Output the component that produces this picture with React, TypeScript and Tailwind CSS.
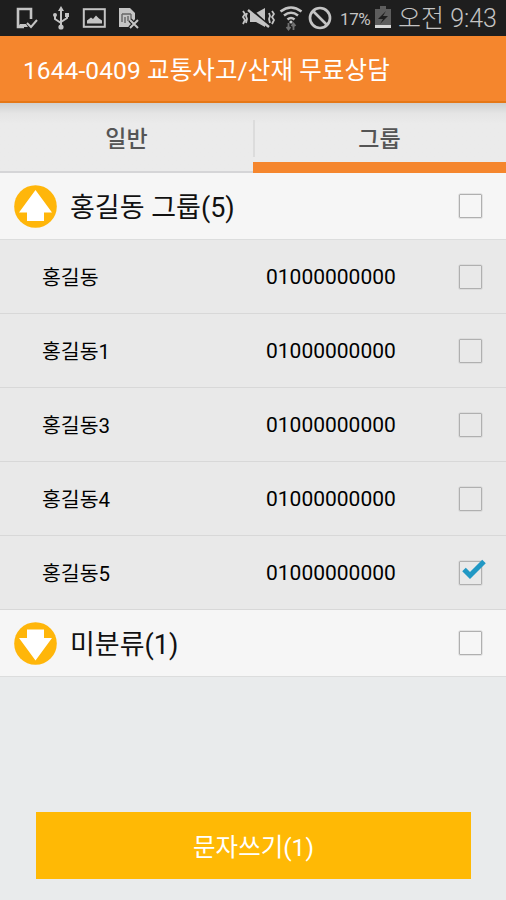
import React, { useState } from 'react';

interface Contact {
  name: string;
  phone: string;
}

const contacts: Contact[] = [
  { name: '홍길동', phone: '01000000000' },
  { name: '홍길동1', phone: '01000000000' },
  { name: '홍길동3', phone: '01000000000' },
  { name: '홍길동4', phone: '01000000000' },
  { name: '홍길동5', phone: '01000000000' },
];

const StatusBar: React.FC = () => (
  <div className="flex h-9 items-center justify-between bg-[#1e1e1e] pr-[9px] pl-4 text-[#c4c4c4]">
    <div className="flex items-center">
      {/* Device with check mark */}
      <svg className="h-6 w-[22px]" viewBox="0 0 22 24" fill="none" stroke="currentColor">
        <path d="M8 21H2V3h13v10" strokeWidth="2.6" />
        <path d="M4 18h6l2 3H2z" fill="currentColor" stroke="none" />
        <path d="M11 17l4 4 6-7" strokeWidth="2" />
      </svg>

      {/* USB */}
      <svg className="ml-[14px] h-6 w-[18px]" viewBox="0 0 18 24" fill="none" stroke="currentColor" strokeWidth="2">
        <path d="M9 4v17M3 10v3l6 4M15 9v3l-6 4" />
        <path d="M9 0l3 5H6z" fill="currentColor" stroke="none" />
        <circle cx="9" cy="21" r="2.6" fill="currentColor" stroke="none" />
        <circle cx="3" cy="9" r="2" fill="currentColor" stroke="none" />
        <path d="M13 7h4v4h-4z" fill="currentColor" stroke="none" />
      </svg>

      {/* Gallery */}
      <svg className="ml-3 h-6 w-6" viewBox="0 0 24 24" fill="none" stroke="currentColor">
        <rect x="1.8" y="3.2" width="21" height="17.6" strokeWidth="2" />
        <path d="M5 17.5v-3l4-3 2 1.5 3-3.5 3 3 3 2v3z" fill="currentColor" stroke="none" />
      </svg>

      {/* SIM card error */}
      <svg className="ml-[11px] h-6 w-[23px]" viewBox="0 0 23 24" fill="none" stroke="currentColor">
        <path d="M2 2h11l5 5v6l-5 8H2z" fill="currentColor" stroke="none" />
        <path d="M5 8h9M5 8v8M8 11v6M11 10v5M14 8v5" stroke="#666" strokeWidth="1.4" />
        <path d="M13 14l8 8M21 14l-8 8" stroke="#1e1e1e" strokeWidth="4.5" />
        <path d="M13 14l8 8M21 14l-8 8" strokeWidth="2" />
      </svg>
    </div>

    <div className="flex items-center">
      {/* Muted with vibration */}
      <svg className="h-6 w-[34px]" viewBox="0 0 34 24" fill="none" stroke="currentColor">
        <path d="M2 5l2 3-2 3 2 3-2 4M6 7l-1 3 1 3-1 4M31 5l2 3-2 3 2 3-2 4M28 7l1 3-1 3 1 4" strokeWidth="1.8" />
        <path d="M9 7h6l9-5v19l-9-5H9z" fill="currentColor" stroke="none" />
        <path d="M9 3l19 17" stroke="#1e1e1e" strokeWidth="3" />
        <path d="M7 4l21 17" strokeWidth="2.4" />
      </svg>

      {/* Wifi with traffic arrows */}
      <svg className="ml-[4px] h-[26px] w-6" viewBox="0 0 24 26" fill="none" stroke="currentColor" strokeWidth="2.6">
        <path d="M1.5 6.5q10.5-8 21 0M5 10.5q7-5.5 14 0M8.5 14.5q3.5-3 7 0" />
        <circle cx="12" cy="17" r="1.6" fill="currentColor" stroke="none" />
        <path d="M9.5 18v6M7.5 22l2 2.5 2-2.5M14.5 25v-6M12.5 21l2-2.5 2 2.5" stroke="#707070" strokeWidth="1.8" />
      </svg>

      {/* Blocked */}
      <svg className="ml-[5px] h-6 w-6" viewBox="0 0 24 24" fill="none" stroke="currentColor" strokeWidth="2.7">
        <circle cx="12" cy="12" r="10" />
        <path d="M5 5l14 14" />
      </svg>

      <span className="ml-[8px] w-[31px] pt-[2px] text-[17px] leading-none tracking-[-0.4px] whitespace-nowrap">17%</span>

      {/* Battery */}
      <svg className="ml-[3px] h-6 w-[18px]" viewBox="0 0 18 24">
        <path d="M6 0h6v3h5v19H1V3h5z" fill="#5d5d5d" />
        <path d="M1 19h16v3H1z" fill="#d8d8d8" />
        <path d="M12 5l-8 8h5l-3 5 8-8H9z" fill="#1e1e1e" />
      </svg>

      <span className="ml-[6px] text-[25px] leading-none font-light whitespace-nowrap">오전 9:43</span>
    </div>
  </div>
);

interface CheckboxProps {
  checked: boolean;
  onChange: () => void;
}

const Checkbox: React.FC<CheckboxProps> = ({ checked, onChange }) => (
  <button
    role="checkbox"
    aria-checked={checked}
    onClick={onChange}
    className="relative mr-6 h-[24px] w-[23px] shrink-0 rounded-[1px] border-[1.5px] border-[#b0b0b0] shadow-[0_0_0_0.5px_#cfcfcf]"
  >
    {checked && (
      <svg className="absolute -top-[4px] left-[1px] h-[24px] w-[26px]" viewBox="0 0 26 24" fill="none">
        <path d="M3 11.5l6 6L23 3.5" stroke="#2198c4" strokeWidth="5" />
      </svg>
    )}
  </button>
);

interface GroupHeaderProps {
  title: string;
  open: boolean;
  checked: boolean;
  onToggle: () => void;
  onCheck: () => void;
}

const GroupHeader: React.FC<GroupHeaderProps> = ({ title, open, checked, onToggle, onCheck }) => (
  <div className="flex h-[67px] items-center border-b border-[#dcdddd] bg-[#f6f6f6]">
    <button onClick={onToggle} className="flex flex-1 items-center gap-[13px] pl-[14px] text-left">
      <svg className="h-[43px] w-[43px]" viewBox="0 0 43 43">
        <circle cx="21.5" cy="21.5" r="21.3" fill="#ffb60a" />
        <path
          d={open ? 'M21.5 5L38 27.5h-8V36H13v-8.5H5z' : 'M13 7.5h17V16h8L21.5 38.5 5 16h8z'}
          fill="#fff"
        />
      </svg>
      <span className="pt-[5px] text-[27px] leading-none whitespace-nowrap text-[#111]">{title}</span>
    </button>
    <Checkbox checked={checked} onChange={onCheck} />
  </div>
);

const App: React.FC = () => {
  const [activeTab, setActiveTab] = useState(1);
  const [open, setOpen] = useState(true);
  const [otherOpen, setOtherOpen] = useState(false);
  const [otherChecked, setOtherChecked] = useState(false);
  const [selected, setSelected] = useState<number[]>([4]);

  const toggleContact = (index: number) => {
    setSelected(prev => (prev.includes(index) ? prev.filter(i => i !== index) : [...prev, index]));
  };

  const allSelected = selected.length === contacts.length;

  return (
    <div className="flex h-[900px] w-[506px] flex-col overflow-hidden bg-[#e9ebec] font-[Roboto,'Noto_Sans_CJK_KR',sans-serif]">
      <StatusBar />

      {/* Title bar */}
      <header className="flex h-[67px] items-center border-b-2 border-[#e57717] bg-[#f5862d] pt-[5px] pl-[23px] text-white">
        <h1 className="text-[24.5px] leading-none tracking-[0.1px] whitespace-nowrap">1644-0409 교통사고/산재 무료상담</h1>
      </header>

      {/* Tabs */}
      <div className="flex h-[70px] bg-linear-to-b from-[#cfd0d0] via-[#e5e5e5] via-15% to-[#ebebeb] to-30%">
        {['일반', '그룹'].map((tab, index) => (
          <button
            key={tab}
            onClick={() => setActiveTab(index)}
            className={`relative flex flex-1 items-center justify-center text-[23px] leading-none font-medium text-[#555] ${
              activeTab === index ? 'border-b-[11px] border-[#f5862d] pt-[14px]' : 'border-b-2 border-[#d5d5d7] pt-[5px]'
            }`}
          >
            {index === 1 && <span className="absolute top-[17px] left-0 h-[37px] w-[2px] bg-[#dcdcdc]" />}
            {tab}
          </button>
        ))}
      </div>

      <GroupHeader
        title="홍길동 그룹(5)"
        open={open}
        checked={allSelected}
        onToggle={() => setOpen(!open)}
        onCheck={() => setSelected(allSelected ? [] : contacts.map((_, i) => i))}
      />

      {open && contacts.map((contact, index) => (
        <div key={contact.name} className="flex h-[74px] items-center border-b border-[#d8d8d8] bg-[#e9e9e9] text-black">
          <span className="w-[266px] pt-[3px] pl-[42px] text-[20.5px] leading-none">{contact.name}</span>
          <span className="flex-1 pt-[2px] text-[21px] leading-none">{contact.phone}</span>
          <Checkbox checked={selected.includes(index)} onChange={() => toggleContact(index)} />
        </div>
      ))}

      <GroupHeader
        title="미분류(1)"
        open={otherOpen}
        checked={otherChecked}
        onToggle={() => setOtherOpen(!otherOpen)}
        onCheck={() => setOtherChecked(!otherChecked)}
      />

      <button className="mt-auto mr-[35px] mb-[21px] ml-9 h-[67px] bg-[#ffb905] pt-[6px] text-[24.5px] leading-none text-white">
        문자쓰기({selected.length + (otherChecked ? 1 : 0)})
      </button>
    </div>
  );
};

export default App;
